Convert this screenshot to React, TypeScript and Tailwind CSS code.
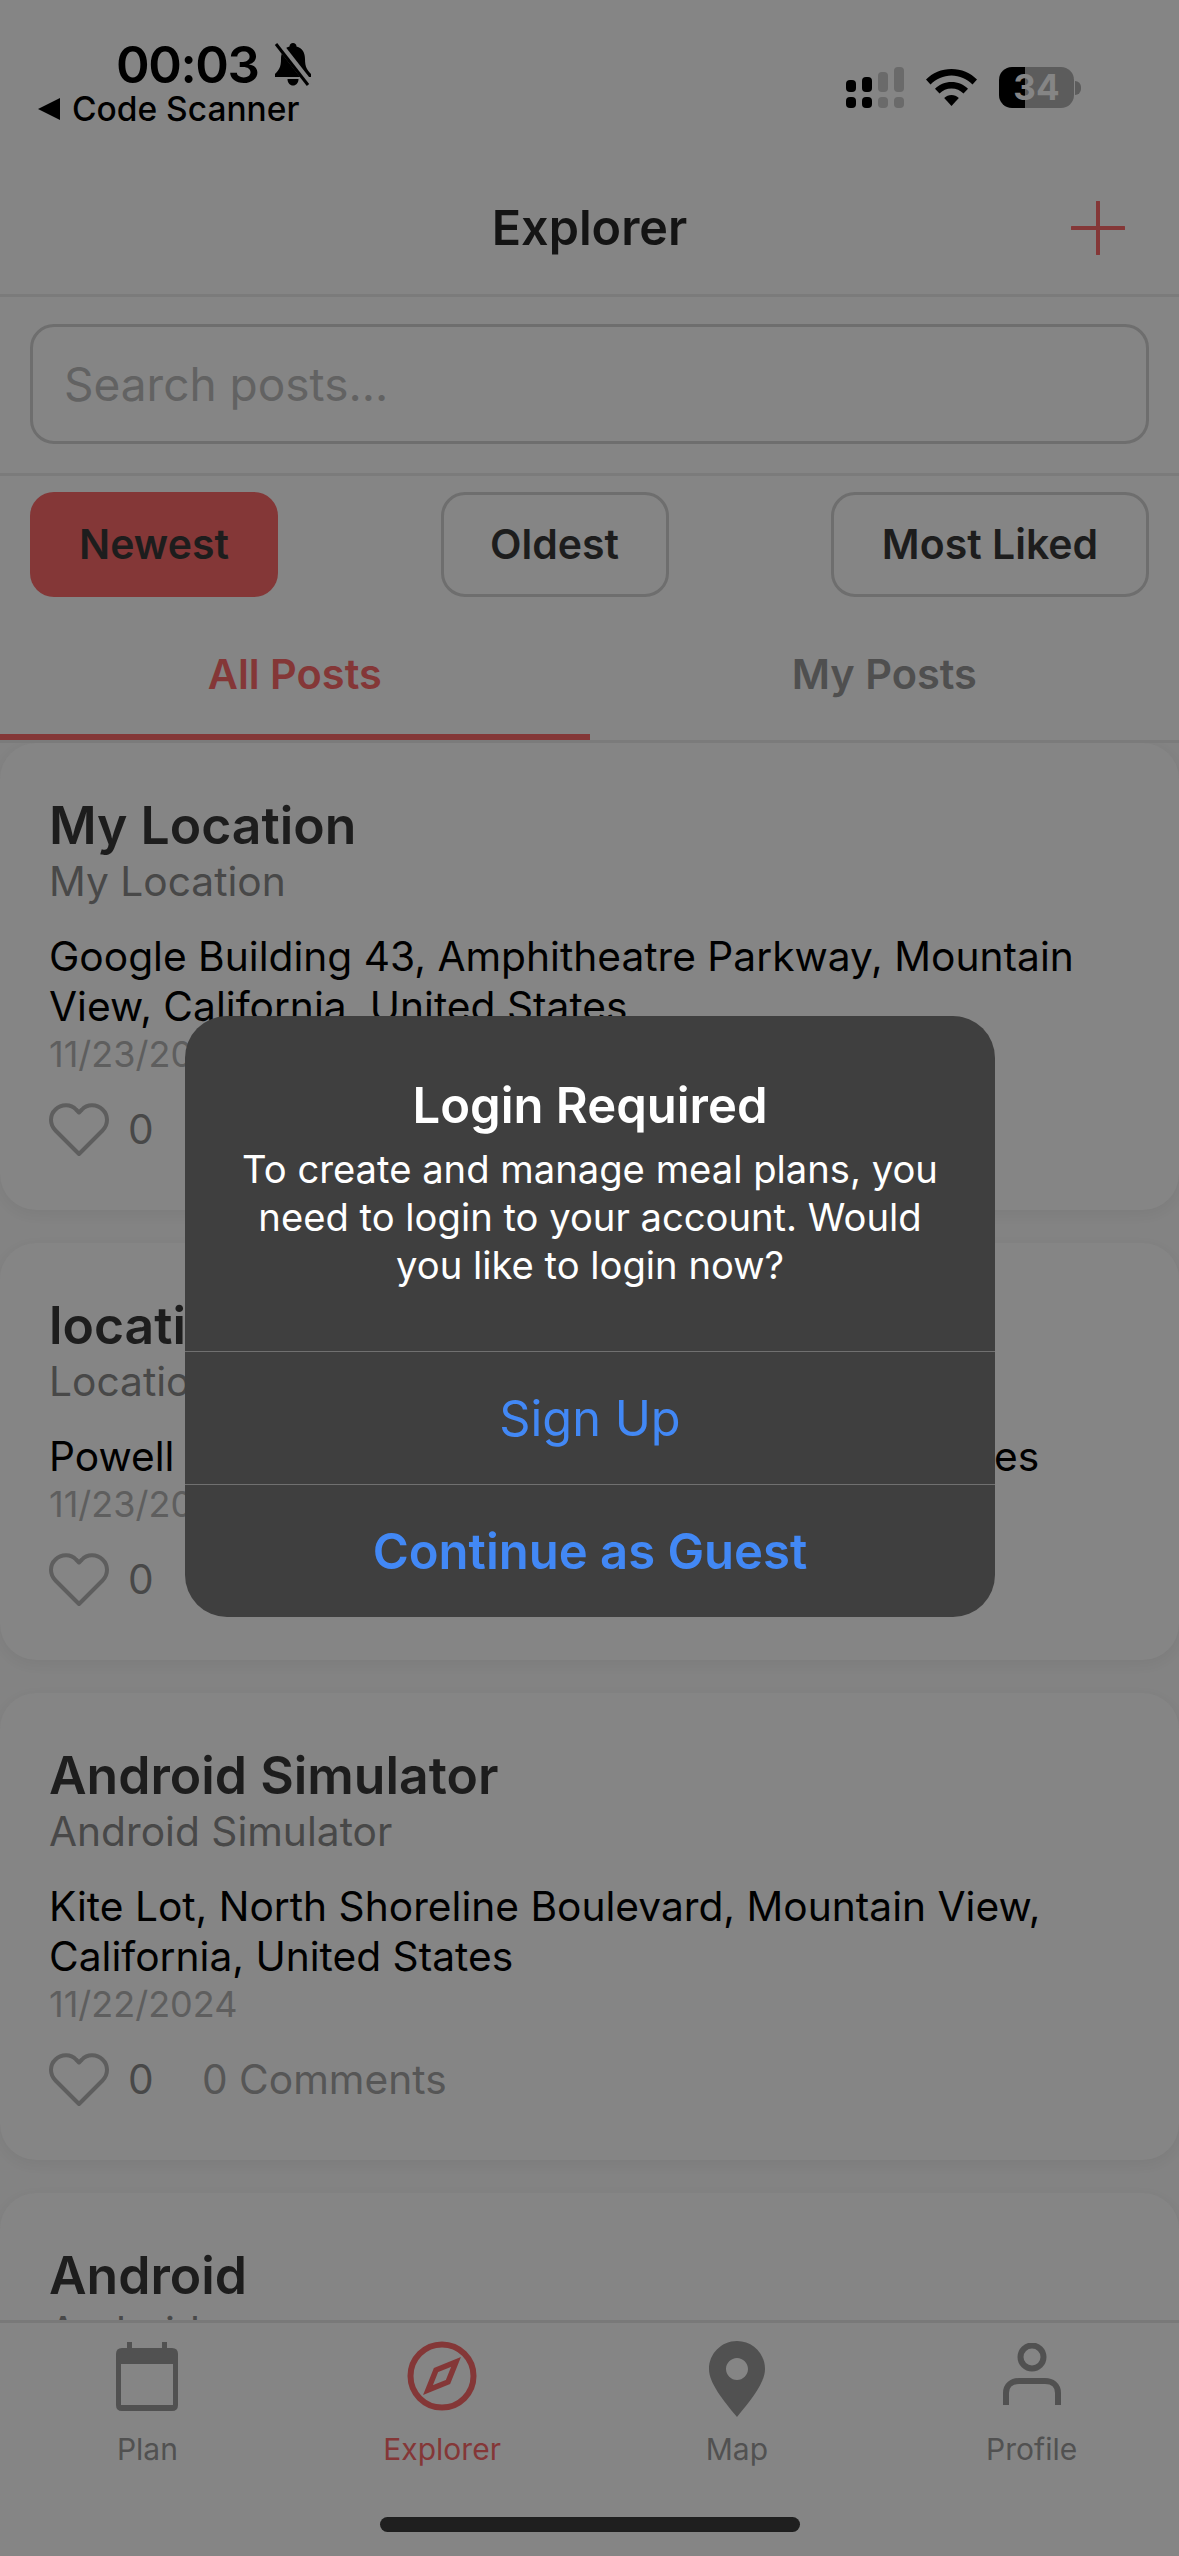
const posts = [
  {
    title: "My Location",
    subtitle: "My Location",
    address: "Google Building 43, Amphitheatre Parkway, Mountain View, California, United States",
    date: "11/23/2024",
  },
  {
    title: "location",
    subtitle: "Location",
    address: "Powell Ave, San Francisco, California, United States",
    date: "11/23/2024",
  },
  {
    title: "Android Simulator",
    subtitle: "Android Simulator",
    address: "Kite Lot, North Shoreline Boulevard, Mountain View, California, United States",
    date: "11/22/2024",
  },
  {
    title: "Android",
    subtitle: "Android",
    address: "Amphitheatre Parkway, Mountain View, California, United States",
    date: "11/22/2024",
  },
];

function MutedBellIcon() {
  return (
    <svg width="40" height="44" viewBox="0 0 40 44" aria-hidden="true">
      <path d="M20 1C22 1 23.500 2.500 23.500 4.500C29.500 6 32 11 32 17C32 25 34 28 38 32V35H2V32C6 28 8 25 8 17C8 11 10.500 6 16.500 4.500C16.500 2.500 18 1 20 1Z" fill="#000" />
      <path d="M14.500 37H25.500C25.500 41 23 43.500 20 43.500C17 43.500 14.500 41 14.500 37Z" fill="#000" />
      <path d="M5 1L37 42" stroke="#858585" strokeWidth="7" />
      <path d="M3 2L35 43" stroke="#000" strokeWidth="3" />
    </svg>
  );
}

function SignalIcon() {
  return (
    <svg width="58" height="41" viewBox="0 0 58 41" aria-hidden="true">
      <rect x="0" y="13" width="10" height="12" rx="4" fill="#000" />
      <rect x="16" y="10" width="10" height="15" rx="4" fill="#000" />
      <rect x="32" y="5" width="10" height="20" rx="4" fill="#6a6a6a" />
      <rect x="48" y="0" width="10" height="25" rx="4" fill="#6a6a6a" />
      <rect x="0" y="30" width="10" height="11" rx="4" fill="#000" />
      <rect x="16" y="30" width="10" height="11" rx="4" fill="#000" />
      <rect x="32" y="30" width="10" height="11" rx="4" fill="#6a6a6a" />
      <rect x="48" y="30" width="10" height="11" rx="4" fill="#6a6a6a" />
    </svg>
  );
}

function WifiIcon() {
  return (
    <svg width="51" height="37" viewBox="0 0 51 37" aria-hidden="true" fill="#000">
      <path d="M25.5 0C35.5 0 44.5 4 51 10.500L46.500 15.500C41 10 33.500 6.500 25.500 6.500C17.500 6.500 10 10 4.500 15.500L0 10.500C6.500 4 15.500 0 25.500 0Z" />
      <path d="M25.500 13C32 13 37.800 15.600 42 19.800L37.500 24.600C34.400 21.500 30.200 19.600 25.500 19.600C20.800 19.600 16.600 21.500 13.500 24.600L9 19.800C13.200 15.600 19 13 25.500 13Z" />
      <path d="M25.500 26C28.200 26 30.800 27 32.800 28.900L25.500 37L18.200 28.900C20.200 27 22.800 26 25.500 26Z" />
    </svg>
  );
}

function HeartIcon() {
  return (
    <svg width="60" height="54" viewBox="0 0 60 54" fill="none" stroke="#5e5e5e" strokeWidth="4" strokeLinejoin="round" aria-hidden="true">
      <path d="M30 51L6.500 27.500C0.500 21.500 0.500 12 6.500 6.500C12.500 0.500 22 1 27 6.500L30 9.500L33 6.500C38 1 47.500 0.500 53.500 6.500C59.500 12 59.500 21.500 53.500 27.500Z" />
    </svg>
  );
}

function PlanIcon() {
  return (
    <svg width="62" height="69" viewBox="0 0 62 69" aria-hidden="true">
      <rect x="11" y="0" width="5" height="12" fill="#515151" />
      <rect x="46" y="0" width="5" height="12" fill="#515151" />
      <path d="M6 6H56Q62 6 62 12V63Q62 69 56 69H6Q0 69 0 63V22V12Q0 6 6 6ZM5 22V63H57V22Z" fill="#515151" fillRule="evenodd" />
    </svg>
  );
}

function CompassIcon() {
  return (
    <svg width="70" height="70" viewBox="0 0 70 70" fill="none" stroke="#843737" aria-hidden="true">
      <circle cx="35" cy="35" r="31.500" strokeWidth="6" />
      <path d="M49 21L41 41L21 49L29 29Z" strokeWidth="5.500" strokeLinejoin="miter" />
    </svg>
  );
}

function PinIcon() {
  return (
    <svg width="56" height="76" viewBox="0 0 56 76" aria-hidden="true">
      <path
        d="M28 0C12.500 0 0 12.500 0 28C0 42 14 59 28 76C42 59 56 42 56 28C56 12.500 43.500 0 28 0ZM28 17C34 17 39 22 39 28C39 34 34 39 28 39C22 39 17 34 17 28C17 22 22 17 28 17Z"
        fill="#515151"
        fillRule="evenodd"
      />
    </svg>
  );
}

function ProfileIcon() {
  return (
    <svg width="58" height="62" viewBox="0 0 58 62" fill="none" stroke="#515151" strokeWidth="6" aria-hidden="true">
      <circle cx="29" cy="14" r="11.500" />
      <path d="M3 62V50C3 42 9 38 16 38H42C49 38 55 42 55 50V62" strokeLinecap="round" />
    </svg>
  );
}

function PostCard({ post }: { post: (typeof posts)[number] }) {
  return (
    <article className="rounded-[36px] bg-[#858585] px-[49px] pt-[52px] pb-[52px] shadow-[0_4px_14px_rgba(0,0,0,0.05)]">
      <h3 className="text-[51.7px] leading-[60px] font-semibold text-[#1d1d1d]">{post.title}</h3>
      <p className="mt-[2px] text-[40.7px] leading-[50px] text-[#484848]">{post.subtitle}</p>
      <p className="mt-[25px] text-[40.7px] leading-[50px] text-[#000]">{post.address}</p>
      <p className="text-[36px] leading-[44px] text-[#5e5e5e]">{post.date}</p>
      <div className="mt-[26px] flex h-[56px] items-center text-[40.7px] text-[#484848]">
        <HeartIcon />
        <span className="ml-[19px] w-[74px]">0</span>
        <span className="text-[#565656]">0 Comments</span>
      </div>
    </article>
  );
}

export default function App() {
  return (
    <div className="relative flex h-[2556px] w-[1179px] flex-col overflow-hidden bg-[#838383] font-['Inter',sans-serif]">
      <header className="h-[297px] shrink-0 border-b-[3px] border-[#7b7b7b] bg-[#858585]">
        <div className="flex h-[165px] justify-between pt-[38px] pr-[98px] pl-[38px]">
          <div>
            <div className="ml-[78px] flex h-[52px] items-center gap-[14px]">
              <span className="text-[51px] leading-none font-semibold tracking-[-1.4px] text-[#000]">00:03</span>
              <MutedBellIcon />
            </div>
            <div className="flex items-center gap-[12px]">
              <span className="h-0 w-0 border-y-[11px] border-r-[22px] border-y-transparent border-r-[#000]" />
              <span className="text-[33.5px] leading-[38px] font-medium text-[#000]">Code Scanner</span>
            </div>
          </div>
          <div className="mt-[29px] flex h-[41px] items-center">
            <SignalIcon />
            <span className="ml-[22px] flex">
              <WifiIcon />
            </span>
            <div className="ml-[22px] flex h-[41px] w-[75px] items-center justify-center rounded-[13px] bg-[linear-gradient(90deg,#000_35%,#5c5c5c_35%)] text-[35px] font-bold text-[#858585]">
              34
            </div>
            <span className="ml-[1px] h-[14px] w-[6px] rounded-r-full bg-[#5c5c5c]" />
          </div>
        </div>
        <div className="relative flex h-[126px] items-center justify-center">
          <h1 className="text-[48.5px] font-semibold text-[#141414]">Explorer</h1>
          <svg className="absolute top-[36px] right-[54px]" width="54" height="54" viewBox="0 0 54 54" stroke="#843737" strokeWidth="4" strokeLinecap="round" aria-hidden="true">
            <path d="M27 1V53M1 27H53" />
          </svg>
        </div>
      </header>

      <div className="h-[179px] shrink-0 border-b-[3px] border-[#7b7b7b] bg-[#858585] px-[30px] pt-[27px]">
        <div className="flex h-[120px] items-center rounded-[24px] border-[3px] border-[#6e6e6e] px-[31px] text-[46px] text-[#626262]">
          Search posts...
        </div>
      </div>

      <div className="flex h-[121px] shrink-0 justify-between bg-[#858585] px-[30px] pt-[16px] text-[41px] font-semibold text-[#1d1d1d]">
        <div className="flex h-[105px] w-[248px] items-center justify-center rounded-[24px] bg-[#843737]">Newest</div>
        <div className="flex h-[105px] w-[228px] items-center justify-center rounded-[24px] border-[3px] border-[#6e6e6e]">Oldest</div>
        <div className="flex h-[105px] w-[318px] items-center justify-center rounded-[24px] border-[3px] border-[#6e6e6e]">Most Liked</div>
      </div>

      <div className="flex h-[146px] shrink-0 border-b-[3px] border-[#7b7b7b] bg-[#858585] text-[41.5px] font-semibold">
        <div className="flex flex-1 items-center justify-center border-b-[6px] border-[#843737] pt-[17px] text-[#843737]">All Posts</div>
        <div className="flex flex-1 items-center justify-center pt-[11px] text-[#4f4f4f]">My Posts</div>
      </div>

      <main className="flex min-h-0 flex-1 flex-col gap-[33px] overflow-hidden">
        {posts.map((post) => (
          <PostCard key={post.title} post={post} />
        ))}
      </main>

      <nav className="grid h-[236px] shrink-0 grid-cols-4 border-t-[3px] border-[#797979] bg-[#858585] text-[30px]">
        <div className="flex h-[144px] flex-col items-center justify-end gap-[20px] text-[#515151]">
          <PlanIcon />
          <span className="leading-[36px]">Plan</span>
        </div>
        <div className="flex h-[144px] flex-col items-center justify-end gap-[20px] text-[#843737]">
          <CompassIcon />
          <span className="leading-[36px]">Explorer</span>
        </div>
        <div className="flex h-[144px] flex-col items-center justify-end gap-[14px] text-[#515151]">
          <PinIcon />
          <span className="leading-[36px]">Map</span>
        </div>
        <div className="flex h-[144px] flex-col items-center justify-end gap-[26px] text-[#515151]">
          <ProfileIcon />
          <span className="leading-[36px]">Profile</span>
        </div>
      </nav>

      <div className="absolute top-[2517px] left-[380px] h-[15px] w-[420px] rounded-full bg-[#1f1f1f]" />

      <div
        role="dialog"
        className="absolute top-[1016px] left-[185px] flex h-[601px] w-[810px] flex-col rounded-[42px] bg-[#3f3f3f] text-center"
      >
        <div className="h-[335px] px-[40px] pt-[60px]">
          <h2 className="text-[49px] leading-[60px] font-semibold text-white">Login Required</h2>
          <p className="mt-[9px] text-[38.2px] leading-[48px] text-white">
            To create and manage meal plans, you need to login to your account. Would you like to login now?
          </p>
        </div>
        <div className="flex h-[133px] items-center justify-center border-t border-[#707070] pt-[2px] text-[48.7px] text-[#4288f5]">Sign Up</div>
        <div className="flex flex-1 items-center justify-center border-t border-[#707070] pt-[2px] text-[49px] font-semibold text-[#4288f5]">
          Continue as Guest
        </div>
      </div>
    </div>
  );
}
